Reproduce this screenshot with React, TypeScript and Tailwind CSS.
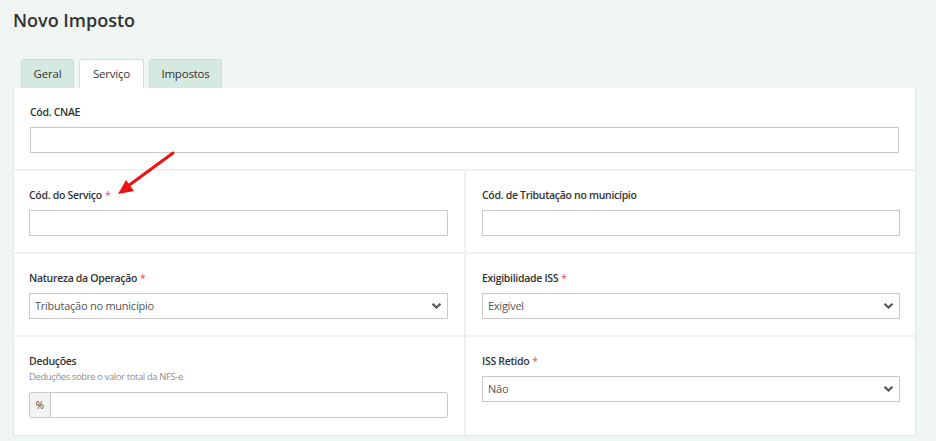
import React from "react";

const Label = ({ text, req }: { text: string; req?: boolean }) => (
  <div className="h-4 text-[10.5px] leading-4 font-semibold tracking-[-0.3px] text-[#333]">
    {text}
    {req && <span className="ml-[3px] text-[#e8495a] font-normal">*</span>}
  </div>
);

const Input = () => (
  <div className="mt-[7px] h-[26px] w-full border border-[#c9c9c9] bg-white" />
);

const Chevron = () => (
  <svg width="11" height="8" viewBox="0 0 11 8" className="shrink-0">
    <path d="M1.5 1.8 L5.5 5.6 L9.5 1.8" fill="none" stroke="#555" strokeWidth="2.2" />
  </svg>
);

const Select = ({ value }: { value: string }) => (
  <div className="mt-[7px] flex h-[26px] w-full items-center justify-between border border-[#c9c9c9] bg-white pl-[5px] pr-[5px] text-[11px] tracking-[-0.25px] text-[#555]">
    <span>{value}</span>
    <Chevron />
  </div>
);

export default function App() {
  return (
    <div
      className="relative h-[441px] w-full overflow-hidden bg-[#eff5f2] pl-[13px] pr-[20px]"
      style={{ fontFamily: '"Open Sans", "Liberation Sans", sans-serif' }}
    >
      <div className="pt-[7px] text-[18px] font-semibold leading-[26px] text-[#333]">Novo Imposto</div>
      <div className="mt-[26px] flex gap-[5px] pl-[8px]">
        <div className="flex h-[29px] w-[53px] items-center justify-center rounded-t-[3px] border border-b-0 border-[#c6ddd2] bg-[#d6e9e1] text-[11.5px] tracking-[-0.2px] text-[#333]">
          Geral
        </div>
        <div className="flex h-[29px] w-[65px] items-center justify-center rounded-t-[3px] border border-b-0 border-[#d3ddd8] bg-white text-[11.5px] tracking-[-0.2px] text-[#333]">
          Serviço
        </div>
        <div className="flex h-[29px] w-[73px] items-center justify-center rounded-t-[3px] border border-b-0 border-[#c6ddd2] bg-[#d6e9e1] text-[11.5px] tracking-[-0.2px] text-[#333]">
          Impostos
        </div>
      </div>
      <div className="w-[903px] border border-t-0 border-[#e3e8e6] bg-white">
        <div className="border-b-2 border-[#eef1f0] pl-[16px] pr-[16px] pt-[16px] pb-[16px]">
          <Label text="Cód. CNAE" />
          <Input />
        </div>
        <div className="grid grid-cols-[452px_1fr] border-b-2 border-[#eef1f0]">
          <div className="border-r-2 border-[#eef1f0] pl-[15px] pr-[16px] pt-[16px] pb-[16px]">
            <Label text="Cód. do Serviço" req />
            <Input />
          </div>
          <div className="pl-[16px] pr-[15px] pt-[16px] pb-[16px]">
            <Label text="Cód. de Tributação no município" />
            <Input />
          </div>
        </div>
        <div className="grid grid-cols-[452px_1fr] border-b-2 border-[#eef1f0]">
          <div className="border-r-2 border-[#eef1f0] pl-[15px] pr-[16px] pt-[16px] pb-[16px]">
            <Label text="Natureza da Operação" req />
            <Select value="Tributação no município" />
          </div>
          <div className="pl-[16px] pr-[15px] pt-[16px] pb-[16px]">
            <Label text="Exigibilidade ISS" req />
            <Select value="Exigível" />
          </div>
        </div>
        <div className="grid grid-cols-[452px_1fr]">
          <div className="border-r-2 border-[#eef1f0] pl-[15px] pr-[16px] pt-[16px] pb-[17px]">
            <Label text="Deduções" />
            <div className="h-4 text-[9.5px] leading-4 tracking-[-0.4px] text-[#8f8f8f]">Deduções sobre o valor total da NFS-e</div>
            <div className="mt-[7px] flex h-[26px] w-full rounded-[2px] border border-[#c9c9c9] bg-white">
              <div className="flex w-[21px] items-center justify-center border-r border-[#c9c9c9] bg-[#f3f3f3] text-[10px] text-[#444]">
                %
              </div>
              <div className="flex-1" />
            </div>
          </div>
          <div className="pl-[16px] pr-[15px] pt-[16px] pb-[17px]">
            <Label text="ISS Retido" req />
            <Select value="Não" />
          </div>
        </div>
      </div>
      <svg className="pointer-events-none absolute left-0 top-0" width="936" height="441">
        <line x1="173" y1="153" x2="128" y2="186" stroke="#ee1111" strokeWidth="3" strokeLinecap="round" />
        <polygon points="118,194 126,180 134,191" fill="#ee1111" />
      </svg>
    </div>
  );
}
